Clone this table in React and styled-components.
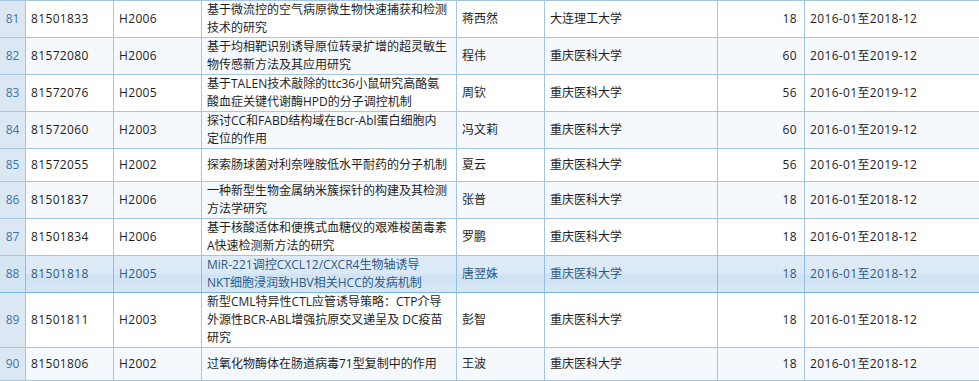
import React from 'react';
import styled, { createGlobalStyle, css } from 'styled-components';

const rows = [
  { no: 81, code: '81501833', dept: 'H2006', title: ['基于微流控的空气病原微生物快速捕获和检测', '技术的研究'], name: '蒋西然', org: '大连理工大学', money: 18, period: '2016-01至2018-12' },
  { no: 82, code: '81572080', dept: 'H2006', title: ['基于均相靶识别诱导原位转录扩增的超灵敏生', '物传感新方法及其应用研究'], name: '程伟', org: '重庆医科大学', money: 60, period: '2016-01至2019-12' },
  { no: 83, code: '81572076', dept: 'H2005', title: ['基于TALEN技术敲除的ttc36小鼠研究高酪氨', '酸血症关键代谢酶HPD的分子调控机制'], name: '周钦', org: '重庆医科大学', money: 56, period: '2016-01至2019-12' },
  { no: 84, code: '81572060', dept: 'H2003', title: ['探讨CC和FABD结构域在Bcr-Abl蛋白细胞内', '定位的作用'], name: '冯文莉', org: '重庆医科大学', money: 60, period: '2016-01至2019-12' },
  { no: 85, code: '81572055', dept: 'H2002', title: ['探索肠球菌对利奈唑胺低水平耐药的分子机制'], name: '夏云', org: '重庆医科大学', money: 56, period: '2016-01至2019-12' },
  { no: 86, code: '81501837', dept: 'H2006', title: ['一种新型生物金属纳米簇探针的构建及其检测', '方法学研究'], name: '张普', org: '重庆医科大学', money: 18, period: '2016-01至2018-12' },
  { no: 87, code: '81501834', dept: 'H2006', title: ['基于核酸适体和便携式血糖仪的艰难梭菌毒素', 'A快速检测新方法的研究'], name: '罗鹏', org: '重庆医科大学', money: 18, period: '2016-01至2018-12' },
  { no: 88, code: '81501818', dept: 'H2005', title: ['MiR-221调控CXCL12/CXCR4生物轴诱导', 'NKT细胞浸润致HBV相关HCC的发病机制'], name: '唐翌姝', org: '重庆医科大学', money: 18, period: '2016-01至2018-12' },
  { no: 89, code: '81501811', dept: 'H2003', title: ['新型CML特异性CTL应管诱导策略：CTP介导', '外源性BCR-ABL增强抗原交叉递呈及 DC疫苗', '研究'], name: '彭智', org: '重庆医科大学', money: 18, period: '2016-01至2018-12' },
  { no: 90, code: '81501806', dept: 'H2002', title: ['过氧化物酶体在肠道病毒71型复制中的作用'], name: '王波', org: '重庆医科大学', money: 18, period: '2016-01至2018-12' },
];

const hoverRow = 88;

const GlobalStyle = createGlobalStyle`
  html, body {
    margin: 0;
    padding: 0;
    overflow: hidden;
    background: #ffffff;
  }
  body {
    font-family: "Open Sans", "Noto Sans CJK SC", sans-serif;
    font-size: 12px;
  }
`;

const Grid = styled.div`
  width: 1060px;
  border-top: 1px solid #a6c6e0;
`;

const Row = styled.div`
  display: grid;
  grid-template-columns: 26px 88px 88px 255px 88px 173px 87px 255px;
  border-bottom: 1px solid #a6c6e0;
  background: ${(p) => (p.$even ? '#f5f9fd' : '#ffffff')};
  color: #1e1e1e;
  ${(p) =>
    p.$hover &&
    css`
      background: linear-gradient(
        to bottom,
        #dfebf7 0%,
        #dbe9f6 46%,
        #cfe3f3 54%,
        #d7e7f5 100%
      );
      border-bottom-color: #7cb6e6;
      color: #2f5b84;
    `}
`;

const Cell = styled.div`
  display: flex;
  align-items: center;
  justify-content: ${(p) => (p.$right ? 'flex-end' : 'flex-start')};
  min-height: 32px;
  padding: 0 ${(p) => (p.$right ? '7px' : '5px')} 0 5px;
  box-sizing: border-box;
  border-right: 1px solid ${(p) => (p.$hover ? '#93bfe4' : '#a6c6e0')};
  line-height: 18px;
  white-space: nowrap;
  letter-spacing: ${(p) => (p.$latin ? '0.35px' : '0')};
`;

const IndexCell = styled(Cell)`
  justify-content: center;
  padding: 0;
  background: ${(p) => (p.$hover ? '#d3e4f3' : '#dbe8f4')};
  color: #4475a4;
`;

const TitleText = styled.div`
  display: flex;
  flex-direction: column;
`;

export default function App() {
  return (
    <>
      <GlobalStyle />
      <Grid>
        {rows.map((r, i) => {
          const hover = r.no === hoverRow;
          return (
            <Row key={r.no} $even={i % 2 === 1} $hover={hover}>
              <IndexCell $hover={hover}>{r.no}</IndexCell>
              <Cell $hover={hover} $latin>{r.code}</Cell>
              <Cell $hover={hover} $latin>{r.dept}</Cell>
              <Cell $hover={hover}>
                <TitleText>
                  {r.title.map((line) => (
                    <span key={line}>{line}</span>
                  ))}
                </TitleText>
              </Cell>
              <Cell $hover={hover}>{r.name}</Cell>
              <Cell $hover={hover}>{r.org}</Cell>
              <Cell $hover={hover} $right $latin>
                {r.money}
              </Cell>
              <Cell $hover={hover} $latin>{r.period}</Cell>
            </Row>
          );
        })}
      </Grid>
    </>
  );
}
